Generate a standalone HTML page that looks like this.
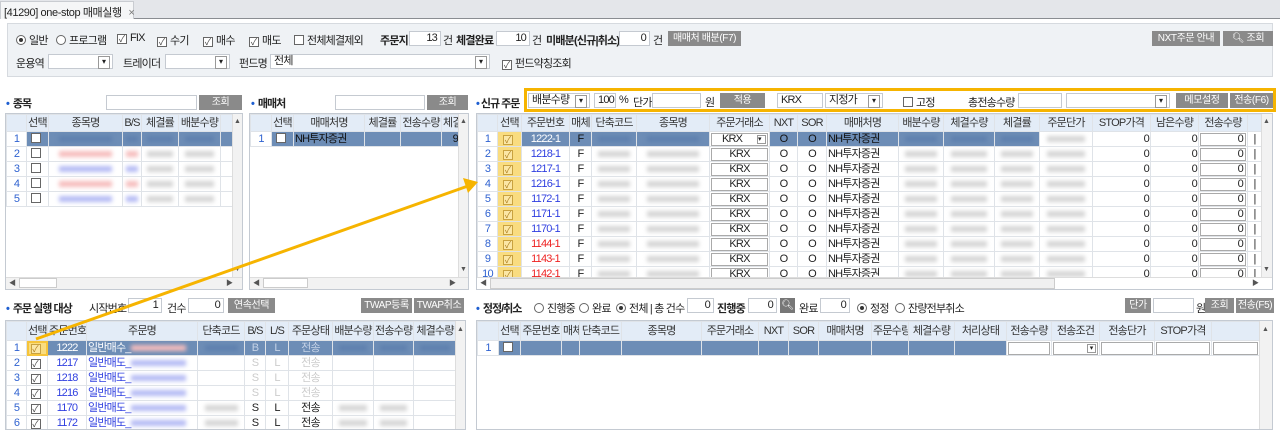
<!DOCTYPE html>
<html><head><meta charset="utf-8">
<style>
*{box-sizing:border-box;margin:0;padding:0}
body{width:1280px;height:426px;overflow:hidden;background:#fff;font-family:"Liberation Sans","Noto Sans CJK KR",sans-serif;font-size:11px;letter-spacing:-0.8px;color:#222;position:relative}
.a{position:absolute;white-space:nowrap}
.inp{position:absolute;background:#fff;border:1px solid #c5cad1;height:15px;font-size:11px;line-height:13px;padding:0 3px}
.sel{position:absolute;background:#fff;border:1px solid #c5cad1;height:15px;font-size:11px;line-height:13px;padding:0 3px}
.sel::after{content:"▾";position:absolute;right:2px;top:1px;width:10px;height:11px;border:1px solid #999;font-size:8px;line-height:10px;text-align:center;background:#fff;letter-spacing:0}
.btn{position:absolute;background:#8a8a8a;color:#fff;height:15px;font-size:10px;line-height:15px;text-align:center;white-space:nowrap;letter-spacing:-0.4px}
.cb{display:inline-block;width:10px;height:10px;border:1px solid #666;background:#fff;vertical-align:-1px;font-size:9px;line-height:8px;text-align:center;color:#444;margin-right:3px;letter-spacing:0}
.rd{display:inline-block;width:10px;height:10px;border:1px solid #666;border-radius:50%;background:#fff;vertical-align:-1px;margin-right:3px;position:relative}
.rd.on::after{content:"";position:absolute;left:2px;top:2px;width:4px;height:4px;border-radius:50%;background:#333}
.sh{position:absolute;font-weight:bold;font-size:11px;white-space:nowrap;letter-spacing:-1px}
.sh b{color:#1e5fd1;margin-right:4px}
.g{position:absolute;background:#fff;border:1px solid #c4cad2;overflow:hidden}
table{border-collapse:collapse;table-layout:fixed;position:absolute;left:0;top:0}
td,th{border:1px solid #dfe3e8;height:15px;padding:0 1px;font-size:11px;line-height:13px;white-space:nowrap;overflow:hidden;text-align:center}
th{background:#e3ecf7;font-weight:normal;color:#333;height:17px}
td.n{color:#2f62d0}
.s td.x{background:#6d8db6;color:#fff}
.y{background:#f9dc80!important}
.r{text-align:right}
.red{color:#e22}
.blu{color:#2f3fe0}
.bl{display:inline-block;width:75%;height:6px;background:#d4d4d4;filter:blur(2px);vertical-align:middle}
.bb{background:#b4baf4}.br{background:#f6bcbc}.bd{background:#5f80ae}
.box{display:block;border:1px solid #aaa;height:13px;line-height:11px;background:#fff;color:#222}
.vs{position:absolute;background:#f2f2f2;border-left:1px solid #ddd}
.hs{position:absolute;background:#f2f2f2;border-top:1px solid #ddd;height:12px}
.ar{position:absolute;font-size:7px;color:#555;width:11px;text-align:center;line-height:11px;letter-spacing:0}
</style></head><body>

<div class="a" style="left:0;top:0;width:1280px;height:19px;background:#e4e6ea;border-bottom:1px solid #8a8d92"></div>
<div class="a" style="left:0;top:1px;width:134px;height:18px;background:#f5f6f7;border:1px solid #c9ccd1;border-bottom:none;padding:2px 3px;font-size:11px;letter-spacing:-0.4px">[41290] one-stop 매매실행 <span style="color:#777;margin-left:4px">×</span></div>

<div class="a" style="left:7px;top:23px;width:1266px;height:54px;background:#eff2f5;border:1px solid #d6dadf"></div>
<div class="a" style="left:16px;top:32px"><span class="rd on"></span>일반</div>
<div class="a" style="left:56px;top:32px"><span class="rd"></span>프로그램</div>
<div class="a" style="left:117px;top:32px"><span class="cb">✓</span>FIX</div>
<div class="a" style="left:157px;top:32px"><span class="cb">✓</span>수기</div>
<div class="a" style="left:203px;top:32px"><span class="cb">✓</span>매수</div>
<div class="a" style="left:249px;top:32px"><span class="cb">✓</span>매도</div>
<div class="a" style="left:294px;top:32px"><span class="cb"></span>전체체결제외</div>
<div class="a" style="left:380px;top:32px;font-weight:bold">주문지</div>
<div class="inp r" style="left:409px;top:31px;width:32px">13</div>
<div class="a" style="left:443px;top:32px">건</div>
<div class="a" style="left:456px;top:32px;font-weight:bold">체결완료</div>
<div class="inp r" style="left:496px;top:31px;width:34px">10</div>
<div class="a" style="left:532px;top:32px">건</div>
<div class="a" style="left:546px;top:32px;font-weight:bold">미배분(신규|취소)</div>
<div class="inp r" style="left:619px;top:31px;width:31px">0</div>
<div class="a" style="left:653px;top:32px">건</div>
<div class="btn" style="left:668px;top:31px;width:73px">매매처 배분(F7)</div>
<div class="btn" style="left:1152px;top:31px;width:68px">NXT주문 안내</div>
<div class="btn" style="left:1223px;top:31px;width:50px">🔍︎ 조회</div>

<div class="a" style="left:16px;top:55px">운용역</div>
<div class="sel" style="left:48px;top:54px;width:65px"></div>
<div class="a" style="left:123px;top:55px">트레이더</div>
<div class="sel" style="left:165px;top:54px;width:65px"></div>
<div class="a" style="left:239px;top:55px">펀드명</div>
<div class="sel" style="left:270px;top:54px;width:220px">전체</div>
<div class="a" style="left:502px;top:55px"><span class="cb">✓</span>펀드약칭조회</div>

<div class="sh" style="left:6px;top:95px"><b>•</b>종목</div>
<div class="inp" style="left:106px;top:95px;width:91px"></div>
<div class="btn" style="left:199px;top:95px;width:43px">조회</div>
<div class="sh" style="left:251px;top:95px"><b>•</b>매매처</div>
<div class="inp" style="left:335px;top:95px;width:90px"></div>
<div class="btn" style="left:427px;top:95px;width:41px">조회</div>
<div class="sh" style="left:476px;top:95px"><b style="margin-right:2px">•</b>신규 주문</div>

<div class="a" style="left:524px;top:88px;width:752px;height:24px;border:3px solid #f6b400"></div>
<div class="sel" style="left:528px;top:93px;width:62px">배분수량</div>
<div class="inp r" style="left:594px;top:93px;width:22px">100</div>
<div class="a" style="left:619px;top:94px">%</div>
<div class="a" style="left:633px;top:94px">단가</div>
<div class="inp" style="left:652px;top:93px;width:49px"></div>
<div class="a" style="left:705px;top:94px">원</div>
<div class="btn" style="left:720px;top:93px;width:45px">적용</div>
<div class="inp" style="left:777px;top:93px;width:46px">KRX</div>
<div class="sel" style="left:825px;top:93px;width:58px">지정가</div>
<div class="a" style="left:903px;top:94px"><span class="cb"></span>고정</div>
<div class="a" style="left:968px;top:94px">총전송수량</div>
<div class="inp" style="left:1018px;top:93px;width:44px"></div>
<div class="sel" style="left:1066px;top:93px;width:104px"></div>
<div class="btn" style="left:1176px;top:93px;width:52px">메모설정</div>
<div class="btn" style="left:1230px;top:93px;width:43px">전송(F6)</div>

<div class="g" style="left:5px;top:113px;width:238px;height:177px">
<table style="width:226px">
<colgroup><col style="width:20px"><col style="width:22px"><col style="width:74px"><col style="width:19px"><col style="width:37px"><col style="width:42px"><col style="width:12px"></colgroup>
<tr><th></th><th>선택</th><th>종목명</th><th>B/S</th><th>체결률</th><th>배분수량</th><th></th></tr>
<tr class="s"><td class="n">1</td><td class="x"><span class="cb"></span></td><td class="x"><i class="bl bd"></i></td><td class="x"><i class="bl bd"></i></td><td class="x"><i class="bl bd"></i></td><td class="x"><i class="bl bd"></i></td><td class="x"></td></tr>
<tr><td class="n">2</td><td><span class="cb"></span></td><td><i class="bl br"></i></td><td><i class="bl br"></i></td><td><i class="bl"></i></td><td><i class="bl"></i></td><td></td></tr>
<tr><td class="n">3</td><td><span class="cb"></span></td><td><i class="bl bb"></i></td><td><i class="bl bb"></i></td><td><i class="bl"></i></td><td><i class="bl"></i></td><td></td></tr>
<tr><td class="n">4</td><td><span class="cb"></span></td><td><i class="bl br"></i></td><td><i class="bl br"></i></td><td><i class="bl"></i></td><td><i class="bl"></i></td><td></td></tr>
<tr><td class="n">5</td><td><span class="cb"></span></td><td><i class="bl bb"></i></td><td><i class="bl bb"></i></td><td><i class="bl"></i></td><td><i class="bl"></i></td><td></td></tr>
</table>
<div class="vs" style="left:226px;top:0;width:11px;height:163px"></div><div class="ar" style="left:226px;top:2px">▲</div><div class="ar" style="left:226px;top:150px">▼</div>
<div class="hs" style="left:0;top:163px;width:237px"></div><div class="ar" style="left:1px;top:164px">◀</div><div class="a" style="left:13px;top:164px;width:38px;height:10px;background:#fff;border:1px solid #ccc"></div><div class="ar" style="left:218px;top:164px">▶</div>
</div>

<div class="g" style="left:249px;top:113px;width:220px;height:177px">
<table style="width:209px">
<colgroup><col style="width:21px"><col style="width:22px"><col style="width:71px"><col style="width:36px"><col style="width:41px"><col style="width:18px"></colgroup>
<tr><th></th><th>선택</th><th>매매처명</th><th>체결률</th><th>전송수량</th><th>체결</th></tr>
<tr class="s"><td class="n">1</td><td class="x"><span class="cb"></span></td><td class="x" style="text-align:left;color:#111">NH투자증권</td><td class="x"></td><td class="x"></td><td class="x r" style="color:#111">9</td></tr>
</table>
<div class="vs" style="left:208px;top:0;width:11px;height:163px"></div><div class="ar" style="left:208px;top:2px">▲</div><div class="ar" style="left:208px;top:150px">▼</div>
<div class="hs" style="left:0;top:163px;width:219px"></div><div class="ar" style="left:1px;top:164px">◀</div><div class="a" style="left:13px;top:164px;width:45px;height:10px;background:#fff;border:1px solid #ccc"></div><div class="ar" style="left:197px;top:164px">▶</div>
</div>

<div class="g" style="left:476px;top:113px;width:797px;height:177px">
<table style="width:784px">
<colgroup><col style="width:20px"><col style="width:24px"><col style="width:48px"><col style="width:22px"><col style="width:45px"><col style="width:73px"><col style="width:60px"><col style="width:28px"><col style="width:29px"><col style="width:72px"><col style="width:45px"><col style="width:51px"><col style="width:45px"><col style="width:53px"><col style="width:58px"><col style="width:48px"><col style="width:49px"><col style="width:14px"></colgroup>
<tr><th></th><th>선택</th><th>주문번호</th><th>매체</th><th>단축코드</th><th>종목명</th><th>주문거래소</th><th>NXT</th><th>SOR</th><th>매매처명</th><th>배분수량</th><th>체결수량</th><th>체결률</th><th>주문단가</th><th>STOP가격</th><th>남은수량</th><th>전송수량</th><th></th></tr>
<tr class="s"><td class="n">1</td><td class="y"><span class="cb" style="border-color:#c9a240;background:#fbe7a6;color:#b08020">✓</span></td><td class="x red">1222-1</td><td class="x" style="color:#111">F</td><td class="x"><i class="bl bd"></i></td><td class="x"><i class="bl bd"></i></td><td><span class="box" style="text-align:left;padding-left:10px;position:relative">KRX<span style="position:absolute;right:1px;top:1px;font-size:7px;border:1px solid #999;width:9px;height:9px;line-height:8px;letter-spacing:0">▾</span></span></td><td class="x" style="color:#111">O</td><td class="x" style="color:#111">O</td><td class="x" style="text-align:left;color:#111">NH투자증권</td><td class="x"><i class="bl bd"></i></td><td class="x"><i class="bl bd"></i></td><td class="x"><i class="bl bd"></i></td><td><i class="bl"></i></td><td class="r">0</td><td class="r">0</td><td><span class="box r" style="padding-right:2px">0</span></td><td>|</td></tr>
<tr><td class="n">2</td><td class="y"><span class="cb" style="border-color:#c9a240;background:#fbe7a6;color:#b08020">✓</span></td><td class="blu">1218-1</td><td>F</td><td><i class="bl"></i></td><td><i class="bl"></i></td><td><span class="box">KRX</span></td><td>O</td><td>O</td><td style="text-align:left">NH투자증권</td><td><i class="bl"></i></td><td><i class="bl"></i></td><td><i class="bl"></i></td><td><i class="bl"></i></td><td class="r">0</td><td class="r">0</td><td><span class="box r" style="padding-right:2px">0</span></td><td>|</td></tr>
<tr><td class="n">3</td><td class="y"><span class="cb" style="border-color:#c9a240;background:#fbe7a6;color:#b08020">✓</span></td><td class="blu">1217-1</td><td>F</td><td><i class="bl"></i></td><td><i class="bl"></i></td><td><span class="box">KRX</span></td><td>O</td><td>O</td><td style="text-align:left">NH투자증권</td><td><i class="bl"></i></td><td><i class="bl"></i></td><td><i class="bl"></i></td><td><i class="bl"></i></td><td class="r">0</td><td class="r">0</td><td><span class="box r" style="padding-right:2px">0</span></td><td>|</td></tr>
<tr><td class="n">4</td><td class="y"><span class="cb" style="border-color:#c9a240;background:#fbe7a6;color:#b08020">✓</span></td><td class="blu">1216-1</td><td>F</td><td><i class="bl"></i></td><td><i class="bl"></i></td><td><span class="box">KRX</span></td><td>O</td><td>O</td><td style="text-align:left">NH투자증권</td><td><i class="bl"></i></td><td><i class="bl"></i></td><td><i class="bl"></i></td><td><i class="bl"></i></td><td class="r">0</td><td class="r">0</td><td><span class="box r" style="padding-right:2px">0</span></td><td>|</td></tr>
<tr><td class="n">5</td><td class="y"><span class="cb" style="border-color:#c9a240;background:#fbe7a6;color:#b08020">✓</span></td><td class="blu">1172-1</td><td>F</td><td><i class="bl"></i></td><td><i class="bl"></i></td><td><span class="box">KRX</span></td><td>O</td><td>O</td><td style="text-align:left">NH투자증권</td><td><i class="bl"></i></td><td><i class="bl"></i></td><td><i class="bl"></i></td><td><i class="bl"></i></td><td class="r">0</td><td class="r">0</td><td><span class="box r" style="padding-right:2px">0</span></td><td>|</td></tr>
<tr><td class="n">6</td><td class="y"><span class="cb" style="border-color:#c9a240;background:#fbe7a6;color:#b08020">✓</span></td><td class="blu">1171-1</td><td>F</td><td><i class="bl"></i></td><td><i class="bl"></i></td><td><span class="box">KRX</span></td><td>O</td><td>O</td><td style="text-align:left">NH투자증권</td><td><i class="bl"></i></td><td><i class="bl"></i></td><td><i class="bl"></i></td><td><i class="bl"></i></td><td class="r">0</td><td class="r">0</td><td><span class="box r" style="padding-right:2px">0</span></td><td>|</td></tr>
<tr><td class="n">7</td><td class="y"><span class="cb" style="border-color:#c9a240;background:#fbe7a6;color:#b08020">✓</span></td><td class="blu">1170-1</td><td>F</td><td><i class="bl"></i></td><td><i class="bl"></i></td><td><span class="box">KRX</span></td><td>O</td><td>O</td><td style="text-align:left">NH투자증권</td><td><i class="bl"></i></td><td><i class="bl"></i></td><td><i class="bl"></i></td><td><i class="bl"></i></td><td class="r">0</td><td class="r">0</td><td><span class="box r" style="padding-right:2px">0</span></td><td>|</td></tr>
<tr><td class="n">8</td><td class="y"><span class="cb" style="border-color:#c9a240;background:#fbe7a6;color:#b08020">✓</span></td><td class="red">1144-1</td><td>F</td><td><i class="bl"></i></td><td><i class="bl"></i></td><td><span class="box">KRX</span></td><td>O</td><td>O</td><td style="text-align:left">NH투자증권</td><td><i class="bl"></i></td><td><i class="bl"></i></td><td><i class="bl"></i></td><td><i class="bl"></i></td><td class="r">0</td><td class="r">0</td><td><span class="box r" style="padding-right:2px">0</span></td><td>|</td></tr>
<tr><td class="n">9</td><td class="y"><span class="cb" style="border-color:#c9a240;background:#fbe7a6;color:#b08020">✓</span></td><td class="red">1143-1</td><td>F</td><td><i class="bl"></i></td><td><i class="bl"></i></td><td><span class="box">KRX</span></td><td>O</td><td>O</td><td style="text-align:left">NH투자증권</td><td><i class="bl"></i></td><td><i class="bl"></i></td><td><i class="bl"></i></td><td><i class="bl"></i></td><td class="r">0</td><td class="r">0</td><td><span class="box r" style="padding-right:2px">0</span></td><td>|</td></tr>
<tr><td class="n">10</td><td class="y"><span class="cb" style="border-color:#c9a240;background:#fbe7a6;color:#b08020">✓</span></td><td class="red">1142-1</td><td>F</td><td><i class="bl"></i></td><td><i class="bl"></i></td><td><span class="box">KRX</span></td><td>O</td><td>O</td><td style="text-align:left">NH투자증권</td><td><i class="bl"></i></td><td><i class="bl"></i></td><td><i class="bl"></i></td><td><i class="bl"></i></td><td class="r">0</td><td class="r">0</td><td><span class="box r" style="padding-right:2px">0</span></td><td>|</td></tr>
</table>
<div class="vs" style="left:784px;top:0;width:12px;height:163px"></div><div class="ar" style="left:784px;top:2px">▲</div><div class="ar" style="left:784px;top:150px">▼</div>
<div class="hs" style="left:0;top:163px;width:796px;background:#fff"></div><div class="ar" style="left:1px;top:164px">◀</div><div class="a" style="left:13px;top:164px;width:565px;height:11px;background:#f0f0f0;border:1px solid #ccc"></div><div class="ar" style="left:773px;top:164px">▶</div>
</div>

<div class="sh" style="left:6px;top:300px"><b>•</b>주문 실행 대상</div>
<div class="a" style="left:89px;top:300px">시작번호</div>
<div class="inp r" style="left:128px;top:298px;width:34px">1</div>
<div class="a" style="left:167px;top:300px">건수</div>
<div class="inp r" style="left:188px;top:298px;width:36px">0</div>
<div class="btn" style="left:228px;top:298px;width:47px">연속선택</div>
<div class="btn" style="left:361px;top:298px;width:51px">TWAP등록</div>
<div class="btn" style="left:414px;top:298px;width:50px">TWAP취소</div>

<div class="sh" style="left:476px;top:300px"><b>•</b>정정/취소</div>
<div class="a" style="left:534px;top:300px"><span class="rd"></span>진행중</div>
<div class="a" style="left:579px;top:300px"><span class="rd"></span>완료</div>
<div class="a" style="left:616px;top:300px"><span class="rd on"></span>전체 | 총 건수</div>
<div class="inp r" style="left:687px;top:298px;width:27px">0</div>
<div class="a" style="left:717px;top:300px;font-weight:bold">진행중</div>
<div class="inp r" style="left:748px;top:298px;width:29px">0</div>
<div class="btn" style="left:780px;top:298px;width:15px;background:#777">🔍︎</div>
<div class="a" style="left:799px;top:300px">완료</div>
<div class="inp r" style="left:820px;top:298px;width:30px">0</div>
<div class="a" style="left:857px;top:300px"><span class="rd on"></span>정정</div>
<div class="a" style="left:895px;top:300px"><span class="rd"></span>잔량전부취소</div>
<div class="btn" style="left:1125px;top:298px;width:26px">단가</div>
<div class="inp" style="left:1153px;top:298px;width:41px"></div>
<div class="a" style="left:1196px;top:300px">원</div>
<div class="btn" style="left:1205px;top:298px;width:29px">조회</div>
<div class="btn" style="left:1236px;top:298px;width:38px">전송(F5)</div>

<div class="g" style="left:5px;top:320px;width:461px;height:110px">
<table style="width:450px">
<colgroup><col style="width:20px"><col style="width:21px"><col style="width:39px"><col style="width:111px"><col style="width:47px"><col style="width:21px"><col style="width:23px"><col style="width:44px"><col style="width:41px"><col style="width:40px"><col style="width:43px"></colgroup>
<tr><th style="height:19px"></th><th>선택</th><th>주문번호</th><th>주문명</th><th>단축코드</th><th>B/S</th><th>L/S</th><th>주문상태</th><th>배분수량</th><th>전송수량</th><th>체결수량</th></tr>
<tr class="s"><td class="n">1</td><td class="y" style="outline:2px solid #f6c43a;outline-offset:-2px"><span class="cb" style="border-color:#c9a240;background:#fbe7a6;color:#b08020">✓</span></td><td class="x red">1222</td><td class="x red" style="text-align:left">일반매수_<i class="bl br" style="width:55px"></i></td><td class="x"><i class="bl bd"></i></td><td class="x" style="color:#c5d2e6">B</td><td class="x" style="color:#c5d2e6">L</td><td class="x" style="color:#c5d2e6">전송</td><td class="x"><i class="bl bd"></i></td><td class="x"><i class="bl bd"></i></td><td class="x"><i class="bl bd"></i></td></tr>
<tr><td class="n">2</td><td><span class="cb">✓</span></td><td class="blu">1217</td><td class="blu" style="text-align:left">일반매도_<i class="bl bb" style="width:55px"></i></td><td></td><td style="color:#ccc">S</td><td style="color:#ccc">L</td><td style="color:#ccc">전송</td><td></td><td></td><td></td></tr>
<tr><td class="n">3</td><td><span class="cb">✓</span></td><td class="blu">1218</td><td class="blu" style="text-align:left">일반매도_<i class="bl bb" style="width:55px"></i></td><td></td><td style="color:#ccc">S</td><td style="color:#ccc">L</td><td style="color:#ccc">전송</td><td></td><td></td><td></td></tr>
<tr><td class="n">4</td><td><span class="cb">✓</span></td><td class="blu">1216</td><td class="blu" style="text-align:left">일반매도_<i class="bl bb" style="width:55px"></i></td><td></td><td style="color:#ccc">S</td><td style="color:#ccc">L</td><td style="color:#ccc">전송</td><td></td><td></td><td></td></tr>
<tr><td class="n">5</td><td><span class="cb">✓</span></td><td class="blu">1170</td><td class="blu" style="text-align:left">일반매도_<i class="bl bb" style="width:55px"></i></td><td><i class="bl"></i></td><td>S</td><td>L</td><td>전송</td><td><i class="bl"></i></td><td><i class="bl"></i></td><td></td></tr>
<tr><td class="n">6</td><td><span class="cb">✓</span></td><td class="blu">1172</td><td class="blu" style="text-align:left">일반매도_<i class="bl bb" style="width:55px"></i></td><td><i class="bl"></i></td><td>S</td><td>L</td><td>전송</td><td><i class="bl"></i></td><td><i class="bl"></i></td><td></td></tr>
</table>
<div class="vs" style="left:449px;top:0;width:11px;height:110px"></div><div class="ar" style="left:449px;top:3px">▲</div>
</div>

<div class="g" style="left:476px;top:320px;width:797px;height:110px">
<table style="width:782px">
<colgroup><col style="width:21px"><col style="width:22px"><col style="width:41px"><col style="width:18px"><col style="width:42px"><col style="width:80px"><col style="width:57px"><col style="width:30px"><col style="width:30px"><col style="width:53px"><col style="width:37px"><col style="width:46px"><col style="width:52px"><col style="width:45px"><col style="width:48px"><col style="width:55px"><col style="width:57px"><col style="width:48px"></colgroup>
<tr><th style="height:19px"></th><th>선택</th><th>주문번호</th><th>매체</th><th>단축코드</th><th>종목명</th><th>주문거래소</th><th>NXT</th><th>SOR</th><th>매매처명</th><th>주문수량</th><th>체결수량</th><th>처리상태</th><th>전송수량</th><th>전송조건</th><th>전송단가</th><th>STOP가격</th><th></th></tr>
<tr class="s"><td class="n">1</td><td class="x"><span class="cb"></span></td><td class="x"></td><td class="x"></td><td class="x"></td><td class="x"></td><td class="x"></td><td class="x"></td><td class="x"></td><td class="x"></td><td class="x"></td><td class="x"></td><td class="x"></td><td><span class="box"></span></td><td><span class="box" style="position:relative"><span style="position:absolute;right:1px;top:1px;font-size:7px;border:1px solid #999;width:9px;height:9px;line-height:8px;letter-spacing:0">▾</span></span></td><td><span class="box"></span></td><td><span class="box"></span></td><td><span class="box"></span></td></tr>
</table>
<div class="vs" style="left:782px;top:0;width:14px;height:110px"></div><div class="ar" style="left:783px;top:3px">▲</div>
</div>

<svg class="a" style="left:0;top:0" width="1280" height="426">
<line x1="36" y1="339" x2="468" y2="186" stroke="#f6b400" stroke-width="3"/>
<polygon points="478,182 463,178 468,193" fill="#f6b400"/>
</svg>
</body></html>
